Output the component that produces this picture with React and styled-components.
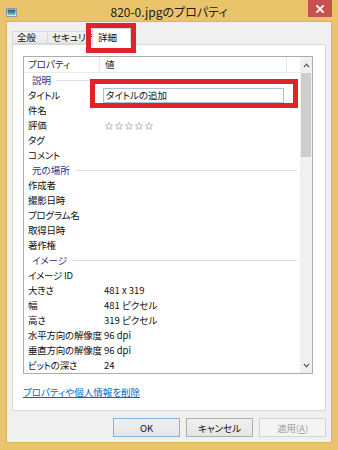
import React from "react";
import styled, { createGlobalStyle } from "styled-components";

const FONT = `"Noto Sans CJK JP", "Noto Sans", sans-serif`;

const GlobalStyle = createGlobalStyle`
  html, body { margin: 0; padding: 0; background: #e9c46a; }
  body {
    font-family: ${FONT};
    font-feature-settings: "palt";
    -webkit-font-smoothing: antialiased;
  }
  * { box-sizing: border-box; }
`;

const Window = styled.div`
  width: 338px;
  height: 450px;
  background: #e9c46a;
  display: flex;
  flex-direction: column;
  padding: 0 6px 7px 6px;
`;

const TitleBar = styled.div`
  height: 22px;
  padding-top: 2px;
  display: grid;
  grid-template-columns: 1fr auto 1fr;
  align-items: center;
`;

const TitleText = styled.div`
  font-size: 12px;
  color: #1c1c1c;
  line-height: 17px;
  white-space: nowrap;
`;

const CloseButton = styled.div`
  justify-self: end;
  align-self: start;
  margin-top: -2px;
  width: 24px;
  height: 17px;
  background: #c75050;
  display: flex;
  align-items: center;
  justify-content: center;
`;

const Client = styled.div`
  flex: 1;
  background: #f0f0f0;
  border: 1px solid #d6b662;
  padding: 6px 5px 5px 5px;
  display: flex;
  flex-direction: column;
`;

const TabStrip = styled.div`
  height: 16px;
  display: flex;
  align-items: flex-end;
  position: relative;
  z-index: 2;
`;

const Tab = styled.div`
  position: relative;
  height: ${(p) => (p.$active ? "17px" : "13px")};
  width: ${(p) => p.$w}px;
  margin-left: ${(p) => (p.$active ? "-2px" : "0")};
  margin-bottom: ${(p) => (p.$active ? "-1px" : "0")};
  padding-left: ${(p) => (p.$active ? "5px" : "4px")};
  border: 1px solid #d9d9d9;
  border-bottom: ${(p) => (p.$active ? "none" : "1px solid #d9d9d9")};
  border-left: ${(p) => (p.$first || p.$active ? "1px solid #d9d9d9" : "none")};
  background: ${(p) =>
    p.$active ? "#ffffff" : "linear-gradient(#f3f3f3, #e8e8e8)"};
  font-size: 9.5px;
  color: #111;
  white-space: nowrap;
  z-index: ${(p) => (p.$active ? 3 : 1)};
  display: flex;
  align-items: center;
`;

const TabLabel = styled.span`
  display: block;
  line-height: 13px;
  overflow: hidden;
`;

const RedMark = styled.div`
  position: absolute;
  top: ${(p) => p.$t}px;
  left: ${(p) => p.$l}px;
  right: ${(p) => p.$r}px;
  bottom: ${(p) => p.$b}px;
  border: 5px solid #e0222a;
  pointer-events: none;
  z-index: 5;
`;

const Panel = styled.div`
  height: 367px;
  background: #ffffff;
  border: 1px solid #d9d9d9;
  padding: 11px 0 0 10px;
  display: flex;
  flex-direction: column;
`;

const ListView = styled.div`
  width: 290px;
  height: 318px;
  border: 1px solid #a9abb0;
  display: flex;
`;

const ListBody = styled.div`
  flex: 1;
  display: flex;
  flex-direction: column;
  min-width: 0;
`;

const HeaderRow = styled.div`
  height: 16px;
  display: grid;
  grid-template-columns: 76px 187px 1fr;
  border-bottom: 1px solid #ececec;
  font-size: 9.5px;
  line-height: 15px;
  color: #2b2b2b;
`;

const HeaderCell = styled.div`
  padding-left: ${(p) => p.$pad}px;
  border-right: ${(p) => (p.$sep ? "1px solid #e6e6e6" : "none")};
  white-space: nowrap;
`;

const Row = styled.div`
  height: 15px;
  display: grid;
  grid-template-columns: 76px 1fr;
  align-items: center;
  font-size: 9.5px;
  line-height: 15px;
  color: #111;
  white-space: nowrap;
`;

const NameCell = styled.div`
  padding-left: 4px;
  letter-spacing: -0.25px;
`;

const ValueCell = styled.div`
  padding-left: 4px;
  display: flex;
  align-items: center;
`;

const GroupRow = styled.div`
  height: 15px;
  display: flex;
  align-items: center;
  padding: 0 3px 0 8px;
  font-size: 9.5px;
  line-height: 15px;
  color: #1e3287;
  white-space: nowrap;
`;

const GroupLine = styled.div`
  flex: 1;
  height: 1px;
  margin-left: 5px;
  background: #d8dfea;
`;

const InputWrap = styled.div`
  position: relative;
  margin-left: -1px;
  width: 181px;
  height: 15px;
`;

const TextInput = styled.div`
  width: 100%;
  height: 100%;
  border: 1px solid #abc2da;
  padding-left: 2px;
  font-size: 9.5px;
  line-height: 13px;
  color: #111;
  background: #fff;
`;

const Stars = styled.div`
  display: flex;
  gap: 2px;
  padding-left: 1px;
`;

const ScrollBar = styled.div`
  width: 12px;
  background: #f0f0f0;
  display: flex;
  flex-direction: column;
`;

const ScrollArrow = styled.div`
  height: 16px;
  display: flex;
  align-items: center;
  justify-content: center;
`;

const ScrollThumb = styled.div`
  height: 84px;
  margin: 0 1px;
  background: #cdcdcd;
`;

const ScrollSpace = styled.div`
  flex: 1;
`;

const Link = styled.a`
  margin-top: 12px;
  font-size: 9.5px;
  line-height: 13px;
  color: #0066cc;
  text-decoration: underline;
  width: max-content;
`;

const ButtonRow = styled.div`
  margin-top: 7px;
  display: flex;
  justify-content: flex-end;
  gap: 6px;
`;

const Button = styled.div`
  width: 67px;
  height: 19px;
  display: flex;
  align-items: center;
  justify-content: center;
  font-size: 9.5px;
  color: ${(p) => (p.$disabled ? "#a3a3a3" : "#111")};
  border: 1px solid
    ${(p) => (p.$default ? "#7fb3e4" : p.$disabled ? "#d3d3d3" : "#adadad")};
  background: ${(p) =>
    p.$disabled ? "#f4f4f4" : "linear-gradient(#f0f0f0, #e5e5e5)"};
`;

const Underline = styled.span`
  text-decoration: underline;
`;

const WindowIcon = () => (
  <svg width="11" height="9" viewBox="0 0 11 9" style={{ marginTop: 1 }}>
    <defs>
      <linearGradient id="ig" x1="0" y1="0" x2="0" y2="1">
        <stop offset="0" stopColor="#1c5877" />
        <stop offset="0.6" stopColor="#4d97a8" />
        <stop offset="1" stopColor="#a9d7cf" />
      </linearGradient>
    </defs>
    <rect x="0.5" y="0.5" width="10" height="8" fill="#f4f4f4" stroke="#8d9aa3" />
    <rect x="1.5" y="1.5" width="8" height="6" fill="url(#ig)" />
  </svg>
);

const CloseIcon = () => (
  <svg width="8" height="8" viewBox="0 0 8 8">
    <path d="M1 1 L7 7 M7 1 L1 7" stroke="#ffffff" strokeWidth="1.8" strokeLinecap="square" />
  </svg>
);

const Star = () => (
  <svg width="8" height="8" viewBox="0 0 10 10">
    <polygon
      points="5,0.6 6.3,3.6 9.5,3.8 7,5.9 7.8,9.2 5,7.4 2.2,9.2 3,5.9 0.5,3.8 3.7,3.6"
      fill="#fbfbfb"
      stroke="#a9a9a9"
      strokeWidth="0.9"
      strokeLinejoin="round"
    />
  </svg>
);

const Chevron = ({ up }) => (
  <svg width="7" height="5" viewBox="0 0 7 5">
    <path
      d={up ? "M1 4 L3.5 1.2 L6 4" : "M1 1 L3.5 3.8 L6 1"}
      fill="none"
      stroke="#5a5a5a"
      strokeWidth="1.2"
    />
  </svg>
);

const rows = [
  { group: "説明" },
  { name: "タイトル", input: "タイトルの追加" },
  { name: "件名" },
  { name: "評価", stars: true },
  { name: "タグ" },
  { name: "コメント" },
  { group: "元の場所" },
  { name: "作成者" },
  { name: "撮影日時" },
  { name: "プログラム名" },
  { name: "取得日時" },
  { name: "著作権" },
  { group: "イメージ" },
  { name: "イメージ ID" },
  { name: "大きさ", value: "481 x 319" },
  { name: "幅", value: "481 ピクセル" },
  { name: "高さ", value: "319 ピクセル" },
  { name: "水平方向の解像度", value: "96 dpi" },
  { name: "垂直方向の解像度", value: "96 dpi" },
  { name: "ビットの深さ", value: "24" },
];

export default function App() {
  return (
    <>
      <GlobalStyle />
      <Window>
        <TitleBar>
          <WindowIcon />
          <TitleText>820-0.jpgのプロパティ</TitleText>
          <CloseButton>
            <CloseIcon />
          </CloseButton>
        </TitleBar>
        <Client>
          <TabStrip>
            <Tab $w={36} $first>
              <TabLabel>全般</TabLabel>
            </Tab>
            <Tab $w={46}>
              <TabLabel>セキュリティ</TabLabel>
            </Tab>
            <Tab $w={39} $active>
              <TabLabel>詳細</TabLabel>
              <RedMark $t={-6} $l={-7} $r={-6} $b={-8} />
            </Tab>
          </TabStrip>
          <Panel>
            <ListView>
              <ListBody>
                <HeaderRow>
                  <HeaderCell $pad={4} $sep>
                    プロパティ
                  </HeaderCell>
                  <HeaderCell $pad={5} $sep>
                    値
                  </HeaderCell>
                  <HeaderCell />
                </HeaderRow>
                {rows.map((r, i) =>
                  r.group ? (
                    <GroupRow key={i}>
                      {r.group}
                      <GroupLine />
                    </GroupRow>
                  ) : (
                    <Row key={i}>
                      <NameCell>{r.name}</NameCell>
                      <ValueCell>
                        {r.input ? (
                          <InputWrap>
                            <TextInput>{r.input}</TextInput>
                            <RedMark $t={-9} $l={-13} $r={-14} $b={-5} />
                          </InputWrap>
                        ) : r.stars ? (
                          <Stars>
                            <Star />
                            <Star />
                            <Star />
                            <Star />
                            <Star />
                          </Stars>
                        ) : (
                          r.value || ""
                        )}
                      </ValueCell>
                    </Row>
                  )
                )}
              </ListBody>
              <ScrollBar>
                <ScrollArrow>
                  <Chevron up />
                </ScrollArrow>
                <ScrollThumb />
                <ScrollSpace />
                <ScrollArrow>
                  <Chevron />
                </ScrollArrow>
              </ScrollBar>
            </ListView>
            <Link>プロパティや個人情報を削除</Link>
          </Panel>
          <ButtonRow>
            <Button $default>OK</Button>
            <Button>キャンセル</Button>
            <Button $disabled>
              適用(<Underline>A</Underline>)
            </Button>
          </ButtonRow>
        </Client>
      </Window>
    </>
  );
}
